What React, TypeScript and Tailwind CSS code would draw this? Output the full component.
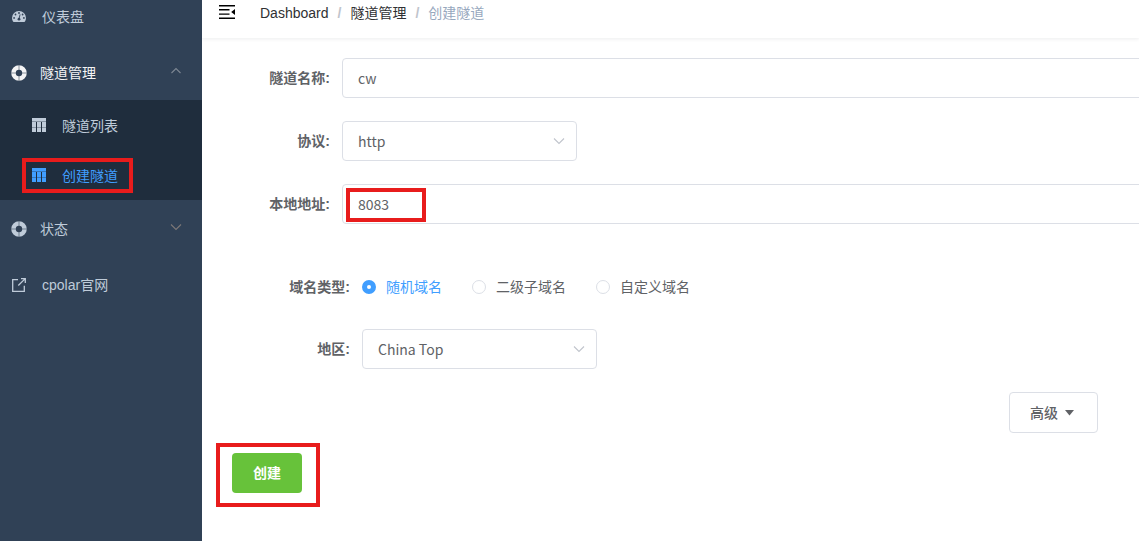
import { useState } from 'react'
import type { ReactNode } from 'react'

function DashboardIcon() {
  return (
    <svg width="14" height="14" viewBox="0 0 14 14" className="shrink-0" aria-hidden="true">
      <path fill="currentColor" d="M7 .9a7 7 0 0 0-7 7c0 1.3.3 2.4 1 3.5.1.3.4.5.7.5h10.6c.3 0 .6-.2.7-.5.7-1.1 1-2.2 1-3.5a7 7 0 0 0-7-7z" />
      <g fill="#304156">
        <circle cx="7" cy="3" r="0.9" />
        <circle cx="3.5" cy="4.5" r="0.9" />
        <circle cx="2.1" cy="7.9" r="0.9" />
        <circle cx="10.6" cy="4.5" r="0.9" />
        <circle cx="11.9" cy="7.9" r="0.9" />
        <circle cx="7" cy="9.2" r="1.4" />
      </g>
      <path d="M7 9 8 4.8" stroke="#304156" strokeWidth="0.9" strokeLinecap="round" />
    </svg>
  )
}

function RingIcon() {
  return (
    <svg width="16" height="16" viewBox="0 0 16 16" className="shrink-0" aria-hidden="true">
      <circle cx="8" cy="8" r="5.5" fill="none" stroke="currentColor" strokeWidth="4.6" />
      <path d="M8 0v5M8 11v5M0 8h5M11 8h5" stroke="#304156" strokeWidth="0.9" opacity="0.6" />
    </svg>
  )
}

function TableIcon() {
  return (
    <svg width="14" height="14" viewBox="0 0 14 14" className="shrink-0" fill="currentColor" aria-hidden="true">
      <path d="M0 0h14v3H0zM0 4h4v5H0zM5 4h4v5H5zM10 4h4v5h-4zM0 10h4v4H0zM5 10h4v4H5zM10 10h4v4h-4z" />
      <path d="M0 3h14v1H0zM0 9h4v1H0zM5 9h4v1H5zM10 9h4v1h-4z" opacity="0.65" />
    </svg>
  )
}

function LinkIcon() {
  return (
    <svg width="14" height="14" viewBox="0 0 14 14" className="shrink-0" fill="none" stroke="currentColor" strokeWidth="1.3" aria-hidden="true">
      <path d="M6 1.7H.7v11.6h11.6V7.8M6.3 7.5l6.4-6.4M9 .7h4.3V5" />
    </svg>
  )
}

function FoldIcon() {
  return (
    <svg width="16" height="14" viewBox="0 0 16 14" fill="currentColor" aria-hidden="true">
      <path d="M0 0h16v1.4H0zM0 4.1h10.5v1.4H0zM0 8.4h10.5v1.4H0zM0 12.6h16V14H0zM16 3.9v6.2L12.2 7z" />
    </svg>
  )
}

function Chevron({ up = false }: { up?: boolean }) {
  return (
    <svg width="12" height="8" viewBox="0 0 12 8" fill="none" stroke="currentColor" strokeWidth="1.1" aria-hidden="true">
      <path d={up ? 'M1.5 6l4.5-4.5L10.5 6' : 'M1 1.5l5 5 5-5'} />
    </svg>
  )
}

// red outline around the spots the guide points at
function Mark({ className }: { className: string }) {
  return <span className={`pointer-events-none absolute border-4 border-[#e81c1c] ${className}`} />
}

function Sidebar() {
  return (
    <nav className="w-[202px] shrink-0 bg-[#304156] text-[#bfcbd9]">
      <a href="#dashboard" className="flex h-11 items-center gap-4 pb-2.5 pl-3">
        <DashboardIcon />
        仪表盘
      </a>
      <button type="button" className="flex h-14 w-full items-center pt-0.5 pr-5 pl-[11px] text-[#f4f4f5]">
        <RingIcon />
        <span className="ml-[13px] flex-1 text-left">隧道管理</span>
        <span className="pb-1 text-[#7d8793]"><Chevron up /></span>
      </button>
      <div className="bg-[#1f2d3d]">
        <a href="#list" className="flex h-[50px] items-center gap-4 pl-8">
          <TableIcon />
          <span className="pt-0.5">隧道列表</span>
        </a>
        <a href="#create" className="relative flex h-[50px] items-center gap-4 pl-8 text-[#409eff]">
          <TableIcon />
          <span className="pt-0.5">创建隧道</span>
          <Mark className="top-2 left-[22px] h-[35px] w-[111px]" />
        </a>
      </div>
      <button type="button" className="flex h-14 w-full items-center pt-0.5 pr-5 pl-[11px]">
        <RingIcon />
        <span className="ml-[13px] flex-1 text-left">状态</span>
        <span className="pb-1 text-[#7d7877]"><Chevron /></span>
      </button>
      <a href="https://www.cpolar.com" className="flex h-14 items-center gap-4 pt-0.5 pl-3">
        <LinkIcon />
        cpolar官网
      </a>
    </nav>
  )
}

function Row({ label, htmlFor, children }: { label: string; htmlFor?: string; children: ReactNode }) {
  const labelClass = 'w-[140px] shrink-0 pr-3 text-right font-bold'
  return (
    <div className="flex h-10 items-center">
      {htmlFor ? <label htmlFor={htmlFor} className={labelClass}>{label}</label> : <span className={labelClass}>{label}</span>}
      {children}
    </div>
  )
}

const fieldClass = "h-10 rounded border border-[#dcdfe6] bg-white px-[15px] font-['Noto_Sans_CJK_SC',sans-serif] text-[#606266] outline-none"

function Select({ id, options }: { id: string; options: string[] }) {
  return (
    <div className="relative w-[235px]">
      <select id={id} className={`${fieldClass} w-full appearance-none`}>
        {options.map((o) => <option key={o}>{o}</option>)}
      </select>
      <span className="pointer-events-none absolute inset-y-0 right-3 flex items-center text-[#c0c4cc]"><Chevron /></span>
    </div>
  )
}

const domainTypes = ['随机域名', '二级子域名', '自定义域名']

export default function App() {
  const [name, setName] = useState('cw')
  const [addr, setAddr] = useState('8083')
  const [domain, setDomain] = useState(domainTypes[0])

  return (
    <div className="flex min-h-screen bg-white font-['Liberation_Sans','Noto_Sans_CJK_SC',sans-serif] text-sm text-[#606266]">
      <Sidebar />
      <main className="min-w-0 flex-1 overflow-hidden">
        <header className="flex h-[38px] items-center pb-3 pl-[17px] shadow-[0_1px_4px_rgba(0,21,41,0.08)]">
          <button type="button" aria-label="收起菜单" className="pb-0.5 text-black"><FoldIcon /></button>
          <nav className="ml-[25px] flex gap-[9px] text-[#303133]">
            <a href="#dashboard">Dashboard</a>
            <span className="font-bold text-[#c0c4cc]">/</span>
            <a href="#tunnels">隧道管理</a>
            <span className="font-bold text-[#c0c4cc]">/</span>
            <span className="text-[#97a8be]">创建隧道</span>
          </nav>
        </header>

        <form className="pt-5" onSubmit={(e) => e.preventDefault()}>
          <div className="flex flex-col gap-[23px]">
            <Row label="隧道名称:" htmlFor="name">
              <input id="name" value={name} onChange={(e) => setName(e.target.value)} className={`${fieldClass} -mr-2 min-w-0 flex-1`} />
            </Row>
            <Row label="协议:" htmlFor="proto">
              <Select id="proto" options={['http', 'https', 'tcp']} />
            </Row>
            <Row label="本地地址:" htmlFor="addr">
              <div className="relative -mr-2 min-w-0 flex-1">
                <input id="addr" value={addr} onChange={(e) => setAddr(e.target.value)} className={`${fieldClass} w-full`} />
                <Mark className="top-1 left-1 h-[34px] w-20" />
              </div>
            </Row>
          </div>

          <div className="mt-[43px] ml-5 flex flex-col gap-[22px]">
            <Row label="域名类型:">
              <div role="radiogroup" aria-label="域名类型" className="flex gap-[30px]">
                {domainTypes.map((d) => (
                  <label key={d} className="flex items-center gap-2.5 has-checked:text-[#409eff]">
                    <input
                      type="radio"
                      name="domain"
                      checked={domain === d}
                      onChange={() => setDomain(d)}
                      className="size-3.5 appearance-none rounded-full border border-[#dcdfe6] bg-white checked:border-5 checked:border-[#409eff]"
                    />
                    {d}
                  </label>
                ))}
              </div>
            </Row>
            <Row label="地区:" htmlFor="region">
              <Select id="region" options={['China Top', 'China VIP', 'Hong Kong']} />
            </Row>
          </div>

          <div className="mt-[23px] flex justify-end pr-[41px]">
            <button type="button" className="flex h-[41px] items-center gap-1.5 rounded border border-[#dcdfe6] pr-[21px] pl-5 font-medium">
              高级
              <svg width="12" height="6" viewBox="0 0 12 6" fill="currentColor" aria-hidden="true"><path d="M1 0h9L5.5 5.5z" /></svg>
            </button>
          </div>

          <div className="relative mt-5 ml-[30px] w-fit">
            <button type="submit" className="block h-10 w-[70px] rounded bg-[#67c23a] font-bold text-white">创建</button>
            <Mark className="-top-2.5 -left-4 h-16 w-[104px]" />
          </div>
        </form>
      </main>
    </div>
  )
}
